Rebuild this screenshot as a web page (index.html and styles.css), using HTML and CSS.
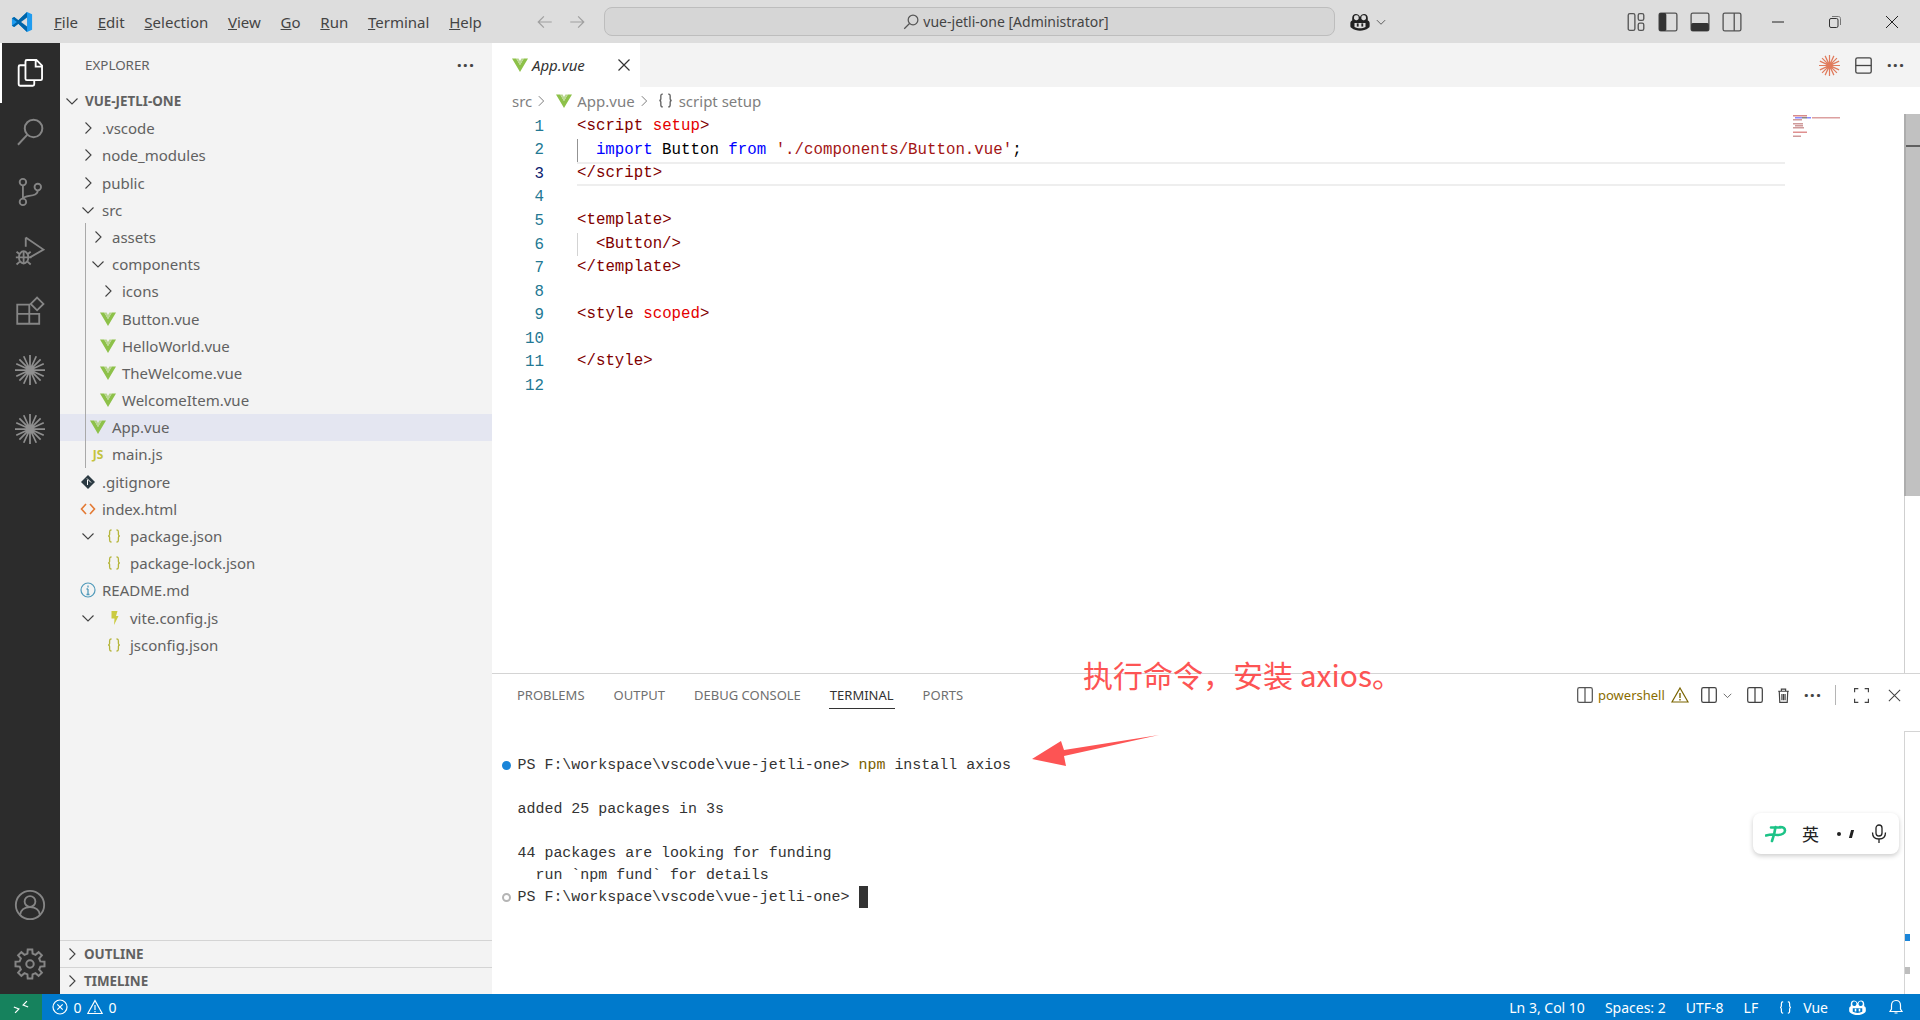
FILE: index.html
```html
<!DOCTYPE html>
<html lang="en">
<head>
    <meta charset="UTF-8">
    <title>App.vue - vue-jetli-one</title>
    <link rel="stylesheet" href="styles.css">
</head>
<body>
    <svg class="defs" width="0" height="0">
        <symbol id="vue" viewBox="0 0 16 16"><path d="M0 1.500h4.200L8 8l3.800-6.500H16L8 15z" fill="#8dc149"/><path d="M4.200 1.500h2.400L8 4l1.400-2.500h2.400L8 8z" fill="#b8d68f"/></symbol>
        <symbol id="chev-r" viewBox="0 0 16 16"><path d="M5.500 2.500 11 8l-5.500 5.500" fill="none" stroke="currentColor" stroke-width="1.100"/></symbol>
        <symbol id="chev-d" viewBox="0 0 16 16"><path d="M2.500 5.500 8 11l5.500-5.500" fill="none" stroke="currentColor" stroke-width="1.100"/></symbol>
        <symbol id="braces" viewBox="0 0 16 16"><path d="M5.500 2H5C3.800 2 3.600 2.800 3.600 4v2.500c0 .8-.5 1.300-1.300 1.500.8.200 1.300.7 1.300 1.500V12c0 1.200.2 2 1.400 2h.5M10.500 2h.5c1.200 0 1.400.8 1.400 2v2.500c0 .8.500 1.300 1.300 1.500-.8.200-1.300.7-1.300 1.500V12c0 1.200-.2 2-1.400 2h-.5" fill="none" stroke="currentColor" stroke-width="1.300"/></symbol>
        <symbol id="burst" viewBox="0 0 24 24"><path d="M12 0v24M0 12h24M3.500 3.500l17 17M20.500 3.500l-17 17M7 1l10 22M17 1 7 23M1 7l22 10M23 7 1 17" fill="none" stroke="currentColor" stroke-width="1.400"/><circle cx="12" cy="12" r="3.500" fill="currentColor"/></symbol>
        <symbol id="split" viewBox="0 0 16 16"><rect x="1.500" y="1.500" width="13" height="13" rx="1.500" fill="none" stroke="currentColor" stroke-width="1.100"/><path d="M8 1.500v13" stroke="currentColor" stroke-width="1.100"/></symbol>
        <symbol id="copilot" viewBox="0 0 24 24"><path d="M12 6.500C10.500 2 3.500 2 3.500 7.500v2.800C1.800 11 1.500 12 1.500 13.500v3c0 .8.400 1.300 1 1.700C5.500 20.600 9 21.500 12 21.500s6.500-.9 9.500-3.300c.6-.4 1-.9 1-1.700v-3c0-1.500-.3-2.500-2-3.200V7.500C20.500 2 13.500 2 12 6.500z" fill="currentColor"/><rect x="5.500" y="4.500" width="5" height="5.500" rx="2" fill="var(--hole)"/><rect x="13.500" y="4.500" width="5" height="5.500" rx="2" fill="var(--hole)"/><path d="M6 13h12v4.500c-3.500 1.800-8.500 1.800-12 0z" fill="var(--hole)"/><rect x="8.500" y="13.500" width="2" height="3.500" fill="currentColor"/><rect x="13.500" y="13.500" width="2" height="3.500" fill="currentColor"/></symbol>
    </svg>

    <header class="titlebar">
        <div class="tb-left">
            <svg class="logo" viewBox="0 0 24 24" width="22" height="22"><path d="M17.500 1 23 3.500v17L17.500 23 8 14l-4.500 3.500L1 16V8l2.500-1.500L8 10z" fill="#1f9cf0"/><path d="M17.500 1v22L8 14 3.500 17.500 1 16l5.500-4L1 8l2.500-1.500L8 10z" fill="#0065a9"/><path d="M17.500 7v10L11 12z" fill="#dddddd"/></svg>
            <nav class="menu">
                <span><u>F</u>ile</span>
                <span><u>E</u>dit</span>
                <span><u>S</u>election</span>
                <span><u>V</u>iew</span>
                <span><u>G</u>o</span>
                <span><u>R</u>un</span>
                <span><u>T</u>erminal</span>
                <span><u>H</u>elp</span>
            </nav>
        </div>
        <div class="tb-nav">
            <svg viewBox="0 0 16 16" width="18" height="18"><path d="M14 8H2.500M7 3 2 8l5 5" fill="none" stroke="#a0a0a0" stroke-width="1.100"/></svg>
            <svg viewBox="0 0 16 16" width="18" height="18"><path d="M2 8h11.500M9 3l5 5-5 5" fill="none" stroke="#a0a0a0" stroke-width="1.100"/></svg>
        </div>
        <div class="cmd">
            <svg viewBox="0 0 16 16" width="18" height="18"><circle cx="9.800" cy="6.200" r="4.300" fill="none" stroke="#555" stroke-width="1.100"/><path d="M6.700 9.300 2 14" stroke="#555" stroke-width="1.100"/></svg>
            <span>vue-jetli-one [Administrator]</span>
        </div>
        <div class="tb-copilot">
            <svg class="ic-copilot" viewBox="0 0 24 24" width="22" height="22"><use href="#copilot"/></svg>
            <svg viewBox="0 0 16 16" width="12" height="12"><use href="#chev-d"/></svg>
        </div>
        <div class="tb-layout">
            <svg viewBox="0 0 18 18" width="20" height="20"><rect x="2" y="1.500" width="6" height="15" rx="1.500" fill="none" stroke="#555" stroke-width="1.200"/><rect x="11" y="1.500" width="5" height="6" rx="1.500" fill="none" stroke="#555" stroke-width="1.200"/><rect x="11" y="10" width="5" height="6.500" rx="1.500" fill="none" stroke="#555" stroke-width="1.200"/></svg>
            <svg viewBox="0 0 18 18" width="20" height="20"><rect x="1" y="1" width="16" height="16" rx="1.500" fill="none" stroke="#555" stroke-width="1.200"/><rect x="1" y="1" width="6.500" height="16" rx="1.500" fill="#333"/></svg>
            <svg viewBox="0 0 18 18" width="20" height="20"><rect x="1" y="1" width="16" height="16" rx="1.500" fill="none" stroke="#555" stroke-width="1.200"/><rect x="1" y="10" width="16" height="7" rx="1.500" fill="#333"/></svg>
            <svg viewBox="0 0 18 18" width="20" height="20"><rect x="1" y="1" width="16" height="16" rx="1.500" fill="none" stroke="#555" stroke-width="1.200"/><path d="M11 1v16" stroke="#555" stroke-width="1.200"/></svg>
        </div>
        <div class="tb-window">
            <svg viewBox="0 0 14 14" width="14" height="14"><path d="M1 7h12" stroke="#222" stroke-width="1"/></svg>
            <svg viewBox="0 0 14 14" width="14" height="14"><rect x="1.500" y="3.500" width="8.500" height="9" rx="1.500" fill="none" stroke="#333"/><path d="M4 1.500h6.500c1.200 0 2 .8 2 2V10" fill="none" stroke="#777"/></svg>
            <svg viewBox="0 0 14 14" width="14" height="14"><path d="M1 1l12 12M13 1 1 13" stroke="#222" stroke-width="1"/></svg>
        </div>
    </header>

    <div class="workbench">
        <aside class="activity">
            <div class="act act-active">
                <svg viewBox="0 0 24 24" width="34" height="34"><path d="M9.800 2.800h6.700l4 4V16a1 1 0 0 1-1 1H9.800a1 1 0 0 1-1-1V3.800a1 1 0 0 1 1-1zM16 3v4.500h4.500M8.800 6.500H5a1 1 0 0 0-1 1V20a1 1 0 0 0 1 1h9a1 1 0 0 0 1-1v-3" fill="none" stroke="#fff" stroke-width="1.300"/></svg>
            </div>
            <div class="act">
                <svg viewBox="0 0 24 24" width="34" height="34"><circle cx="14.500" cy="9.500" r="6.200" fill="none" stroke="#858585" stroke-width="1.400"/><path d="M10 14 3.500 21" stroke="#858585" stroke-width="1.400"/></svg>
            </div>
            <div class="act">
                <svg viewBox="0 0 24 24" width="34" height="34"><circle cx="7" cy="5" r="2.300" fill="none" stroke="#858585" stroke-width="1.300"/><circle cx="7" cy="19" r="2.300" fill="none" stroke="#858585" stroke-width="1.300"/><circle cx="17.500" cy="8.500" r="2.300" fill="none" stroke="#858585" stroke-width="1.300"/><path d="M7 7.300v9.400M17.500 10.800c0 3-3 3.500-6 4-2 .3-4 1-4.500 2" fill="none" stroke="#858585" stroke-width="1.300"/></svg>
            </div>
            <div class="act">
                <svg viewBox="0 0 24 24" width="34" height="34"><path d="M9 2.500 21.500 11 12 16.500M9 9V2.500" fill="none" stroke="#858585" stroke-width="1.300"/><ellipse cx="7.500" cy="16.500" rx="3.300" ry="4.300" fill="none" stroke="#858585" stroke-width="1.300"/><path d="M4.200 16.500h6.600M7.500 12.500v8.300M2.500 12.500l2.300 1.800M12.500 12.500l-2.300 1.800M2.500 21.500l2.300-2M12.500 21.500l-2.300-2M2 16.500h2.200M10.800 16.500H13" fill="none" stroke="#858585" stroke-width="1.300"/></svg>
            </div>
            <div class="act">
                <svg viewBox="0 0 24 24" width="34" height="34"><path d="M3 7.500h8.500V21H3zM3 14h15.500v7H11.500M11.500 14V7.500" fill="none" stroke="#858585" stroke-width="1.300"/><path d="M17 2.500 21.500 7 17 11.500 12.500 7z" fill="none" stroke="#858585" stroke-width="1.300"/></svg>
            </div>
            <div class="act act-burst"><svg viewBox="0 0 24 24" width="30" height="30"><use href="#burst"/></svg></div>
            <div class="act act-burst"><svg viewBox="0 0 24 24" width="30" height="30"><use href="#burst"/></svg></div>
            <div class="act-spacer"></div>
            <div class="act">
                <svg viewBox="0 0 24 24" width="34" height="34"><circle cx="12" cy="12" r="10" fill="none" stroke="#858585" stroke-width="1.300"/><circle cx="12" cy="9.500" r="3.800" fill="none" stroke="#858585" stroke-width="1.300"/><path d="M5 19c.5-3.500 3-5.500 7-5.500s6.500 2 7 5.500" fill="none" stroke="#858585" stroke-width="1.300"/></svg>
            </div>
            <div class="act">
                <svg viewBox="0 0 24 24" width="32" height="32"><path d="M10.280 1.130L13.720 1.130L13.940 4.240L16.120 5.140L18.470 3.100L20.900 5.530L18.860 7.880L19.760 10.060L22.870 10.280L22.870 13.720L19.760 13.940L18.860 16.120L20.900 18.470L18.470 20.900L16.120 18.860L13.940 19.760L13.720 22.870L10.280 22.870L10.060 19.760L7.880 18.860L5.530 20.900L3.100 18.470L5.140 16.120L4.240 13.940L1.130 13.720L1.130 10.280L4.240 10.060L5.140 7.880L3.100 5.530L5.530 3.100L7.880 5.140L10.060 4.240Z" fill="none" stroke="#858585" stroke-width="1.500"/><circle cx="12" cy="12" r="2.800" fill="none" stroke="#858585" stroke-width="1.500"/></svg>
            </div>
        </aside>

        <aside class="sidebar">
            <div class="side-title">
                <span>EXPLORER</span>
                <span class="dots">···</span>
            </div>
            <div class="tree">
                <div class="root-row"><svg class="chev" viewBox="0 0 16 16"><use href="#chev-d"/></svg><b>VUE-JETLI-ONE</b></div>
                <div class="row d0"><span class="slot"><svg class="chev" viewBox="0 0 16 16"><use href="#chev-r"/></svg></span>.vscode</div>
                <div class="row d0"><span class="slot"><svg class="chev" viewBox="0 0 16 16"><use href="#chev-r"/></svg></span>node_modules</div>
                <div class="row d0"><span class="slot"><svg class="chev" viewBox="0 0 16 16"><use href="#chev-r"/></svg></span>public</div>
                <div class="row d0"><span class="slot"><svg class="chev" viewBox="0 0 16 16"><use href="#chev-d"/></svg></span>src</div>
                <div class="nest">
                    <div class="row d1"><span class="slot"><svg class="chev" viewBox="0 0 16 16"><use href="#chev-r"/></svg></span>assets</div>
                    <div class="row d1"><span class="slot"><svg class="chev" viewBox="0 0 16 16"><use href="#chev-d"/></svg></span>components</div>
                    <div class="row d2"><span class="slot"><svg class="chev" viewBox="0 0 16 16"><use href="#chev-r"/></svg></span>icons</div>
                    <div class="row d2"><span class="slot"><svg class="ficon" viewBox="0 0 16 16"><use href="#vue"/></svg></span>Button.vue</div>
                    <div class="row d2"><span class="slot"><svg class="ficon" viewBox="0 0 16 16"><use href="#vue"/></svg></span>HelloWorld.vue</div>
                    <div class="row d2"><span class="slot"><svg class="ficon" viewBox="0 0 16 16"><use href="#vue"/></svg></span>TheWelcome.vue</div>
                    <div class="row d2"><span class="slot"><svg class="ficon" viewBox="0 0 16 16"><use href="#vue"/></svg></span>WelcomeItem.vue</div>
                    <div class="row d1 selected"><span class="slot"><svg class="ficon" viewBox="0 0 16 16"><use href="#vue"/></svg></span>App.vue</div>
                    <div class="row d1"><span class="slot"><span class="js-icon">JS</span></span>main.js</div>
                </div>
                <div class="row d0"><span class="slot"><svg class="ficon" viewBox="0 0 16 16"><path d="M8 1l7 7-7 7-7-7z" fill="#2b3a42"/><path d="M7 4.500 11 8.500M7.500 6v5" stroke="#fff" stroke-width="1"/></svg></span>.gitignore</div>
                <div class="row d0"><span class="slot"><svg class="ficon" viewBox="0 0 16 16"><path d="M6 3 1.500 8 6 13M10 3l4.500 5L10 13" fill="none" stroke="#e37933" stroke-width="1.600"/></svg></span>index.html</div>
                <div class="row d0"><span class="slot"><svg class="chev" viewBox="0 0 16 16"><use href="#chev-d"/></svg></span><span class="slot-file"><svg class="ficon json" viewBox="0 0 16 16"><use href="#braces"/></svg></span>package.json</div>
                <div class="row d0"><span class="slot"></span><span class="slot-file"><svg class="ficon json" viewBox="0 0 16 16"><use href="#braces"/></svg></span>package-lock.json</div>
                <div class="row d0"><span class="slot"><svg class="ficon" viewBox="0 0 16 16"><circle cx="8" cy="8" r="7" fill="none" stroke="#519aba" stroke-width="1.200"/><path d="M8 3.500v2M8 7v5.500M6.500 7H8M6.500 12.500h3" fill="none" stroke="#519aba" stroke-width="1.300"/></svg></span>README.md</div>
                <div class="row d0"><span class="slot"><svg class="chev" viewBox="0 0 16 16"><use href="#chev-d"/></svg></span><span class="slot-file"><svg class="ficon" viewBox="0 0 16 16"><path d="M5.500 1h6L10 6h2.500L8 15l.5-6.500H5.500z" fill="#cbcb41"/></svg></span>vite.config.js</div>
                <div class="row d0"><span class="slot"></span><span class="slot-file"><svg class="ficon json" viewBox="0 0 16 16"><use href="#braces"/></svg></span>jsconfig.json</div>
            </div>
            <div class="side-section"><svg class="chev" viewBox="0 0 16 16"><use href="#chev-r"/></svg><b>OUTLINE</b></div>
            <div class="side-section"><svg class="chev" viewBox="0 0 16 16"><use href="#chev-r"/></svg><b>TIMELINE</b></div>
        </aside>

        <main class="center">
            <div class="tabs">
                <div class="tab">
                    <svg class="ficon" viewBox="0 0 16 16"><use href="#vue"/></svg>
                    <span class="tab-name">App.vue</span>
                    <svg class="tab-close" viewBox="0 0 16 16" width="16" height="16"><path d="M2.500 2.500l11 11M13.500 2.500l-11 11" stroke="#333" stroke-width="1.200"/></svg>
                </div>
                <div class="tab-actions">
                    <svg class="ic-burst" viewBox="0 0 24 24" width="21" height="21"><use href="#burst"/></svg>
                    <svg viewBox="0 0 16 16" width="19" height="19"><rect x="1.500" y="1.500" width="13" height="13" rx="1.500" fill="none" stroke="#444" stroke-width="1.100"/><path d="M1.500 8h13" stroke="#444" stroke-width="1.100"/></svg>
                    <span class="dots">···</span>
                </div>
            </div>
            <div class="crumbs">
                <span>src</span>
                <svg class="crumb-chev" viewBox="0 0 16 16"><use href="#chev-r"/></svg>
                <svg class="ficon crumb-vue" viewBox="0 0 16 16"><use href="#vue"/></svg>
                <span>App.vue</span>
                <svg class="crumb-chev" viewBox="0 0 16 16"><use href="#chev-r"/></svg>
                <svg class="crumb-braces" viewBox="0 0 16 16"><use href="#braces"/></svg>
                <span>script setup</span>
            </div>
            <div class="editor">
                <div class="code">
                    <div class="line"><span class="num">1</span><span class="txt"><i class="tag">&lt;script</i> <i class="attr">setup</i><i class="tag">&gt;</i></span></div>
                    <div class="line"><span class="num">2</span><span class="txt"><span class="guide guide-on"></span><i class="kw">import</i> Button <i class="kw">from</i> <i class="str">'./components/Button.vue'</i>;</span></div>
                    <div class="line current"><span class="num">3</span><span class="txt"><i class="tag">&lt;/script&gt;</i></span></div>
                    <div class="line"><span class="num">4</span><span class="txt"></span></div>
                    <div class="line"><span class="num">5</span><span class="txt"><i class="tag">&lt;template&gt;</i></span></div>
                    <div class="line"><span class="num">6</span><span class="txt"><span class="guide"></span><i class="tag">&lt;Button/&gt;</i></span></div>
                    <div class="line"><span class="num">7</span><span class="txt"><i class="tag">&lt;/template&gt;</i></span></div>
                    <div class="line"><span class="num">8</span><span class="txt"></span></div>
                    <div class="line"><span class="num">9</span><span class="txt"><i class="tag">&lt;style</i> <i class="attr">scoped</i><i class="tag">&gt;</i></span></div>
                    <div class="line"><span class="num">10</span><span class="txt"></span></div>
                    <div class="line"><span class="num">11</span><span class="txt"><i class="tag">&lt;/style&gt;</i></span></div>
                    <div class="line"><span class="num">12</span><span class="txt"></span></div>
                </div>
                <div class="minimap">
                    <svg width="60" height="30" viewBox="0 0 60 30">
                        <rect x="8" y="0" width="14" height="1.500" fill="#d98a8a"/>
                        <rect x="10" y="2" width="7" height="1.500" fill="#8a8aff"/>
                        <rect x="17" y="2" width="5" height="1.500" fill="#888"/>
                        <rect x="22" y="2" width="4" height="1.500" fill="#8a8aff"/>
                        <rect x="27" y="2" width="28" height="1.500" fill="#dca0a0"/>
                        <rect x="8" y="4" width="9" height="1.500" fill="#cf9a9a"/>
                        <rect x="8" y="8" width="10" height="1.500" fill="#cf9a9a"/>
                        <rect x="10" y="10" width="8" height="1.500" fill="#cf9a9a"/>
                        <rect x="8" y="12" width="11" height="1.500" fill="#cf9a9a"/>
                        <rect x="8" y="16.500" width="14" height="1.500" fill="#e09090"/>
                        <rect x="8" y="20.500" width="8" height="1.500" fill="#cf9a9a"/>
                    </svg>
                </div>
                <div class="scroll">
                    <div class="scroll-thumb"><div class="scroll-cursor"></div></div>
                </div>
            </div>
            <section class="panel">
                <div class="panel-head">
                    <div class="panel-tabs">
                        <span>PROBLEMS</span>
                        <span>OUTPUT</span>
                        <span>DEBUG CONSOLE</span>
                        <span class="panel-tab-on">TERMINAL</span>
                        <span>PORTS</span>
                    </div>
                    <div class="panel-actions">
                        <svg class="ic-split-warn" viewBox="0 0 16 16" width="18" height="18"><use href="#split"/></svg>
                        <span class="shell-name">powershell</span>
                        <svg class="warn" viewBox="0 0 18 18" width="18" height="18"><path d="M9 2 17 16H1z" fill="none" stroke="#7a6400" stroke-width="1.200"/><path d="M9 7v5M9 13v1.500" stroke="#7a6400" stroke-width="1.400"/></svg>
                        <svg class="pa-split" viewBox="0 0 16 16" width="18" height="18"><use href="#split"/></svg>
                        <svg class="pa-chev" viewBox="0 0 16 16" width="11" height="11"><use href="#chev-d"/></svg>
                        <svg class="pa-split2" viewBox="0 0 16 16" width="18" height="18"><use href="#split"/></svg>
                        <svg class="pa-trash" viewBox="0 0 16 16" width="17" height="17"><path d="M3 4h10M6 4V2h4v2M4 4l.5 10.500h7L12 4M6.500 6.500v6M8 6.500v6M9.500 6.500v6" fill="none" stroke="#424242" stroke-width="1.100"/></svg>
                        <span class="dots pa-dots">···</span>
                        <span class="pa-sep"></span>
                        <svg class="pa-max" viewBox="0 0 16 16" width="17" height="17"><path d="M1.500 5V1.500H5M11 1.500h3.500V5M14.500 11v3.500H11M5 14.500H1.500V11" fill="none" stroke="#424242" stroke-width="1.100"/></svg>
                        <svg class="pa-close" viewBox="0 0 16 16" width="15" height="15"><path d="M2 2l12 12M14 2 2 14" stroke="#424242" stroke-width="1.100"/></svg>
                    </div>
                </div>
                <div class="panel-body">
                    <div class="term">
                        <div class="term-line"><span class="deco deco-ok"></span>PS F:\workspace\vscode\vue-jetli-one&gt; <i class="cmd-name">npm</i> install axios</div>
                        <div class="term-line"></div>
                        <div class="term-line">added 25 packages in 3s</div>
                        <div class="term-line"></div>
                        <div class="term-line">44 packages are looking for funding</div>
                        <div class="term-line">  run `npm fund` for details</div>
                        <div class="term-line"><span class="deco deco-idle"></span>PS F:\workspace\vscode\vue-jetli-one&gt; <span class="cursor"></span></div>
                    </div>
                    <div class="term-ruler">
                        <div class="mark mark-blue"></div>
                        <div class="mark mark-gray"></div>
                    </div>
                </div>
                <div class="note">执行命令，安装 axios。</div>
                <svg class="note-arrow" viewBox="0 0 130 34" width="130" height="34"><path d="M128 1 33 16 30 7 1 25 35 32 33 22z" fill="#fd5454"/></svg>
                <div class="ime">
                    <svg viewBox="0 0 22 18" width="22" height="18"><path d="M7 16C8.500 12 10 6 10.500 2M15 2c3 0 5 1 5 3.500S17 10 12 10M1 10.500c3.500-1 7-1.500 11.500-.5M6 2.500h9.500" fill="none" stroke="#1dc387" stroke-width="2.600" stroke-linecap="round"/></svg>
                    <span class="ime-lang">英</span>
                    <span class="ime-punct"><i></i><b></b></span>
                    <svg viewBox="0 0 16 20" width="16" height="20"><rect x="5" y="1" width="6" height="11" rx="3" fill="none" stroke="#222" stroke-width="1.300"/><path d="M1.500 8.500C1.500 12.500 4 15 8 15s6.500-2.500 6.500-6.500M8 15v4" fill="none" stroke="#222" stroke-width="1.300"/></svg>
                </div>
            </section>
        </main>
    </div>

    <footer class="statusbar">
        <div class="status-left">
            <span class="remote"><svg viewBox="0 0 16 16" width="16" height="16"><path d="M1 12.500l4.500-3-4.500-3M15 3.500l-4.500 3 4.500 3" fill="none" stroke="#fff" stroke-width="1.200" transform="rotate(-12 8 8)"/></svg></span>
            <span class="status-errors">
                <svg viewBox="0 0 16 16" width="16" height="16"><circle cx="8" cy="8" r="7" fill="none" stroke="#fff" stroke-width="1.200"/><path d="M5.300 5.300l5.400 5.400M10.700 5.300l-5.400 5.400" stroke="#fff" stroke-width="1.200"/></svg>
                <span>0</span>
                <svg viewBox="0 0 16 16" width="16" height="16"><path d="M8 1.500 15.200 14.500H.8z" fill="none" stroke="#fff" stroke-width="1.200"/><path d="M8 6v5M8 12v1.300" stroke="#fff" stroke-width="1.200"/></svg>
                <span>0</span>
            </span>
        </div>
        <div class="status-right">
            <span>Ln 3, Col 10</span>
            <span>Spaces: 2</span>
            <span>UTF-8</span>
            <span>LF</span>
            <span class="status-lang"><svg viewBox="0 0 16 16" width="15" height="15"><use href="#braces"/></svg>Vue</span>
            <svg class="status-copilot" viewBox="0 0 24 24" width="19" height="19"><use href="#copilot"/></svg>
            <svg class="status-bell" viewBox="0 0 16 16" width="16" height="16"><path d="M8 1.500c-3 0-4.500 2-4.500 5V10L2 12.500h12L12.500 10V6.500c0-3-1.500-5-4.500-5zM6.500 14h3" fill="none" stroke="#fff" stroke-width="1.200"/></svg>
        </div>
    </footer>
</body>
</html>
```

FILE: styles.css
```css
* {
    box-sizing: border-box;
}
html, body {
    height: 100%;
}
body {
    display: flex;
    flex-direction: column;
    height: 1020px;
    margin: 0;
    overflow: hidden;
    background-color: #fff;
    color: #616161;
    font-family: "Noto Sans", sans-serif;
    font-size: 15px;
}
i {
    font-style: normal;
}
svg {
    flex-shrink: 0;
}
.defs {
    position: absolute;
}
.dots {
    font-size: 18px;
    font-weight: 700;
    line-height: 1;
    letter-spacing: 1px;
    color: #444;
}

/* title bar */
.titlebar {
    --hole: #dddddd;
    display: flex;
    align-items: center;
    flex: 0 0 43px;
    background-color: #dddddd;
    color: #333;
}
.tb-left {
    display: flex;
    align-items: center;
    flex: 0 0 530px;
    padding-left: 11px;
}
.logo {
    margin-right: 21px;
}
.menu {
    display: flex;
    gap: 19.75px;
    font-size: 15px;
    color: #444;
}
.tb-nav {
    display: flex;
    gap: 14px;
    flex: 0 0 74px;
    padding-left: 6px;
}
.cmd {
    display: flex;
    align-items: center;
    justify-content: center;
    gap: 3px;
    flex: 0 0 731px;
    height: 29px;
    padding-left: 72px;
    border: 1px solid #bdbdbd;
    border-radius: 8px;
    background-color: #d6d6d6;
    font-size: 14px;
    color: #444;
}
.tb-copilot {
    display: flex;
    align-items: center;
    gap: 4px;
    flex: 0 0 291px;
    padding-left: 14px;
    color: #444;
}
.ic-copilot {
    color: #222;
}
.tb-layout {
    display: flex;
    gap: 12px;
}
.tb-window {
    display: flex;
    gap: 43px;
    margin-left: 29px;
}

/* activity bar */
.workbench {
    display: flex;
    flex: 1;
    min-height: 0;
}
.activity {
    display: flex;
    flex-direction: column;
    flex: 0 0 60px;
    background-color: #2c2c2c;
}
.act {
    display: flex;
    align-items: center;
    justify-content: center;
    flex: 0 0 59.5px;
}
.act-active {
    border-left: 2px solid #fff;
    padding-right: 2px;
}
.act-burst {
    flex-basis: 59px;
    color: #8f8f8f;
}
.act-spacer {
    flex: 1;
}

/* explorer */
.sidebar {
    display: flex;
    flex-direction: column;
    flex: 0 0 432px;
    background-color: #f3f3f3;
}
.side-title {
    display: flex;
    align-items: center;
    justify-content: space-between;
    flex: 0 0 44px;
    padding: 0 17px 0 25px;
    font-size: 13.4px;
    color: #616161;
}
.tree {
    flex: 1;
    min-height: 0;
}
.root-row {
    display: flex;
    align-items: center;
    gap: 5px;
    height: 27.6px;
    padding-left: 4px;
    font-size: 13.4px;
    color: #616161;
}
.row {
    display: flex;
    align-items: center;
    height: 27.2px;
    white-space: nowrap;
    font-size: 15px;
    color: #616161;
}
.d0 {
    padding-left: 20px;
}
.d1 {
    padding-left: 30px;
}
.d2 {
    padding-left: 40px;
}
.slot {
    display: flex;
    align-items: center;
    flex: 0 0 22px;
    height: 100%;
}
.slot-file {
    display: flex;
    align-items: center;
    flex: 0 0 28px;
    padding-left: 4px;
}
.chev {
    width: 16px;
    height: 16px;
    color: #424242;
}
.ficon {
    width: 16px;
    height: 16px;
}
.json {
    color: #b5b53a;
}
.js-icon {
    width: 16px;
    font-size: 12px;
    font-weight: 700;
    text-align: center;
    color: #c3c33c;
}
.selected {
    background-color: #e4e6f1;
}
.nest {
    position: relative;
}
.nest::before {
    content: "";
    position: absolute;
    left: 25px;
    top: 0;
    bottom: 0;
    width: 1px;
    background-color: #a9a9a9;
}
.side-section {
    display: flex;
    align-items: center;
    gap: 4px;
    flex: 0 0 27px;
    padding-left: 4px;
    border-top: 1px solid #d4d4d4;
    font-size: 13.4px;
    color: #616161;
}

/* editor */
.center {
    position: relative;
    display: flex;
    flex-direction: column;
    flex: 1;
    min-width: 0;
}
.tabs {
    display: flex;
    justify-content: space-between;
    flex: 0 0 44px;
    background-color: #f3f3f3;
}
.tab {
    display: flex;
    align-items: center;
    width: 148px;
    padding-left: 20px;
    background-color: #fff;
}
.tab-name {
    margin-left: 4px;
    font-style: italic;
    font-size: 15px;
    color: #333;
}
.tab-close {
    margin-left: 31px;
}
.tab-actions {
    display: flex;
    align-items: center;
    gap: 14px;
    padding-right: 15px;
}
.ic-burst {
    color: #e07b5c;
}
.crumbs {
    display: flex;
    align-items: center;
    flex: 0 0 27px;
    padding-left: 20px;
    font-size: 15px;
    color: #7f7f7f;
}
.crumb-chev {
    width: 14px;
    height: 14px;
    margin: 0 6px 0 2px;
    color: #777;
}
.crumb-vue {
    margin: 0 5px 0 2px;
}
.crumb-braces {
    width: 17px;
    height: 17px;
    margin-right: 5px;
    color: #666;
}
.editor {
    display: flex;
    flex: 1;
    min-height: 0;
}
.code {
    flex: 0 0 1293px;
    padding-top: 1px;
    font-family: "Liberation Mono", monospace;
    font-size: 15.78px;
    color: #000;
}
.line {
    display: flex;
    align-items: center;
    height: 23.55px;
    white-space: pre;
}
.num {
    flex: 0 0 52px;
    margin-right: 33px;
    text-align: right;
    color: #237893;
}
.txt {
    flex: 1;
    height: 100%;
    line-height: 23.55px;
}
.current .num {
    color: #0b216f;
}
.current .txt {
    line-height: 19.55px;
    border-top: 2px solid #eeeeee;
    border-bottom: 2px solid #eeeeee;
}
.guide {
    display: inline-block;
    width: 18.9px;
    height: 100%;
    vertical-align: top;
    border-left: 1px solid #d3d3d3;
}
.guide-on {
    border-left-color: #939393;
}
.tag {
    color: #800000;
}
.attr {
    color: #e50000;
}
.kw {
    color: #0000ff;
}
.str {
    color: #a31515;
}
.minimap {
    flex: 0 0 119px;
    padding-top: 1px;
}
.scroll {
    flex: 0 0 16px;
    border-left: 1px solid #cfcfcf;
}
.scroll-thumb {
    height: 382px;
    padding-top: 31px;
    border-left: 2px solid #adadad;
    margin-left: -1px;
    background-color: #c1c1c1;
}
.scroll-cursor {
    height: 2px;
    background-color: #606060;
}

/* terminal */
.panel {
    display: flex;
    flex-direction: column;
    flex: 0 0 321px;
    border-top: 1px solid #d4d4d4;
}
.panel-head {
    display: flex;
    align-items: center;
    justify-content: space-between;
    flex: 0 0 42px;
}
.panel-tabs {
    display: flex;
    gap: 29px;
    padding-left: 25px;
    font-size: 13px;
    color: #6f6f6f;
}
.panel-tab-on {
    position: relative;
    color: #333;
}
.panel-tab-on::after {
    content: "";
    position: absolute;
    left: -1px;
    right: -1px;
    bottom: -5px;
    height: 1px;
    background-color: #333;
}
.panel-actions {
    display: flex;
    align-items: center;
    padding-right: 18px;
    color: #424242;
}
.ic-split-warn {
    color: #555;
}
.shell-name {
    margin: 0 6px 0 4px;
    font-size: 13px;
    color: #8a6d00;
}
.pa-split {
    margin-left: 11px;
}
.pa-chev {
    margin-left: 4px;
}
.pa-split2 {
    margin-left: 13px;
}
.pa-trash {
    margin-left: 11px;
}
.pa-dots {
    margin-left: 12px;
}
.pa-sep {
    width: 1px;
    height: 20px;
    margin-left: 13px;
    background-color: #b5b5b5;
}
.pa-max {
    margin-left: 17px;
}
.pa-close {
    margin-left: 17px;
}
.panel-body {
    display: flex;
    flex: 1;
    min-height: 0;
}
.term {
    flex: 1;
    padding: 38px 0 0 25.5px;
    font-family: "Liberation Mono", monospace;
    font-size: 14.96px;
    color: #333;
}
.term-line {
    position: relative;
    height: 22px;
    line-height: 22px;
    white-space: pre;
}
.deco {
    position: absolute;
    left: -16px;
    top: 6.5px;
    width: 9px;
    height: 9px;
    border-radius: 50%;
}
.deco-ok {
    background-color: #1a85d9;
}
.deco-idle {
    border: 2px solid #b5b5b5;
}
.cmd-name {
    color: #795e00;
}
.cursor {
    display: inline-block;
    width: 9px;
    height: 22px;
    vertical-align: top;
    background-color: #333;
}
.term-ruler {
    flex: 0 0 16px;
    margin-top: 15px;
    padding-top: 202px;
    border-top: 1px solid #d4d4d4;
    border-left: 1px solid #d4d4d4;
}
.mark {
    width: 5px;
    height: 7px;
}
.mark-blue {
    background-color: #1a85d9;
}
.mark-gray {
    margin-top: 26px;
    background-color: #bdbdbd;
}

/* pasted-on annotation and the IME floater */
.note {
    position: absolute;
    left: 591px;
    top: 613px;
    font-family: "Noto Sans CJK SC", "Noto Sans", sans-serif;
    font-size: 30px;
    line-height: 36px;
    color: #fd5454;
    white-space: nowrap;
}
.note-arrow {
    position: absolute;
    left: 539px;
    top: 691px;
}
.ime {
    position: absolute;
    left: 1261px;
    top: 770px;
    display: flex;
    align-items: center;
    justify-content: space-between;
    width: 146px;
    height: 41px;
    padding: 0 12px;
    border-radius: 8px;
    background-color: #fff;
    box-shadow: 0 2px 5px rgba(0, 0, 0, 0.2);
}
.ime-lang {
    font-family: "Noto Sans CJK SC", sans-serif;
    font-size: 17px;
    color: #222;
    margin-left: -3px;
}
.ime-punct {
    display: flex;
    align-items: center;
    gap: 9px;
}
.ime-punct i {
    width: 4px;
    height: 4px;
    border-radius: 50%;
    background-color: #222;
}
.ime-punct b {
    width: 3px;
    height: 8px;
    background-color: #222;
    transform: skewX(-15deg);
}

/* status bar */
.statusbar {
    --hole: #007acc;
    display: flex;
    justify-content: space-between;
    flex: 0 0 26px;
    background-color: #007acc;
    color: #fff;
    font-size: 14px;
}
.status-left, .status-errors, .status-right, .status-lang, .remote {
    display: flex;
    align-items: center;
}
.remote {
    justify-content: center;
    width: 42px;
    height: 100%;
    background-color: #16825d;
}
.status-errors {
    gap: 5.5px;
    padding-left: 10px;
}
.status-right {
    gap: 20px;
    padding-right: 16px;
}
.status-lang {
    gap: 10px;
}
.status-copilot {
    color: #fff;
}
.status-bell {
    margin-left: 1px;
}
```
